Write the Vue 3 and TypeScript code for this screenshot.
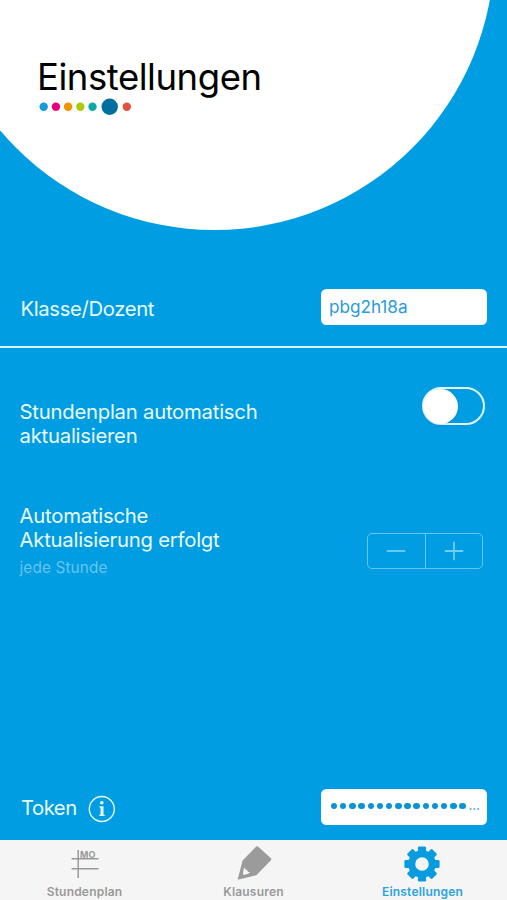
<script setup lang="ts">
import { ref } from 'vue'

interface Dot { color: string; active?: boolean }

const dots: Dot[] = [
  { color: '#129be0' },
  { color: '#e6007e' },
  { color: '#f39200' },
  { color: '#afca0b' },
  { color: '#0fa9a5' },
  { color: '#006f9f', active: true },
  { color: '#e2513d' },
]
const className = ref('pbg2h18a')
const autoUpdate = ref(false)
const tokenDots = Array.from({ length: 15 }, (_, i) => i)
const teeth = [0, 45, 90, 135, 180, 225, 270, 315]
</script>

<template>
  <div class="screen">
    <header class="header">
      <svg class="disc" width="507" height="240" viewBox="0 0 507 240" aria-hidden="true">
        <circle cx="214.3" cy="-50" r="280" />
      </svg>
      <h1 class="title">Einstellungen</h1>
      <div class="dots">
        <svg width="96" height="18" viewBox="0 0 96 18" aria-hidden="true">
          <circle
            v-for="(d, i) in dots" :key="d.color"
            :cx="i < 5 ? 4.7 + i * 12.2 : d.active ? 70.7 : 87.8" cy="8.8"
            :r="d.active ? 8.2 : 4.2" :fill="d.color"
          />
        </svg>
      </div>
    </header>

    <section class="row class-row">
      <span class="label klasse">Klasse/Dozent</span>
      <div class="field">{{ className }}</div>
    </section>

    <section class="row auto-row">
      <p class="label">Stundenplan automatisch<br />aktualisieren</p>
      <button class="switch" role="switch" :aria-checked="autoUpdate" @click="autoUpdate = !autoUpdate">
        <span class="knob" :class="{ on: autoUpdate }"></span>
      </button>
    </section>

    <section class="row interval-row">
      <div>
        <p class="label">Automatische<br />Aktualisierung erfolgt</p>
        <p class="hint">jede Stunde</p>
      </div>
      <div class="stepper">
        <button class="step"><svg width="20" height="20" viewBox="0 0 20 20"><path d="M.7 10h18.6" /></svg></button>
        <button class="step"><svg width="20" height="20" viewBox="0 0 20 20"><path d="M.7 10h18.6M10 .7v18.6" /></svg></button>
      </div>
    </section>

    <section class="row token-row">
      <div class="token-label">
        <span class="label token">Token</span>
        <svg class="info" width="28" height="28" viewBox="0 0 28 28">
          <circle class="ring" cx="13.8" cy="14" r="12.5" />
          <circle class="fill" cx="13.8" cy="7.8" r="1.8" />
          <path class="fill" d="M11.3 11.2h4.2v8.5h1.2v1.2h-5.4v-1.2h1.2v-7.3h-1.2z" />
        </svg>
      </div>
      <div class="field secret">
        <span v-for="i in tokenDots" :key="i" class="bullet"></span>
        <span class="more">…</span>
      </div>
    </section>

    <nav class="tabs">
      <a class="tab">
        <svg width="36" height="36" viewBox="0 0 36 36">
          <path class="grid" d="M4.5 14.7h27M4.5 24.7h27M11.2 6v28" />
          <text x="13" y="13.6" class="mo">MO</text>
        </svg>
        <span>Stundenplan</span>
      </a>
      <a class="tab">
        <svg width="36" height="36" viewBox="0 0 36 36">
          <path class="pencil" fill-rule="evenodd" d="M20.3 2.5q1-.7 2 .2l12.6 11.5q.9 1 0 2.1L20.3 31.2 1.6 35.8 6.6 16.4zM8 23.2 6.8 30.4q3.6 1 7.4-1.9-2.8-.2-3.1-2.3-2.2-.1-3.1-3z" />
        </svg>
        <span>Klausuren</span>
      </a>
      <a class="tab selected">
        <svg class="gear" width="36" height="36" viewBox="0 0 36 36">
          <g class="teeth">
            <rect v-for="a in teeth" :key="a" x="13.9" y=".4" width="8.2" height="9" rx="1.3" :transform="`rotate(${a} 18 18)`" />
          </g>
          <circle class="hub" cx="18" cy="18" r="10.3" />
        </svg>
        <span>Einstellungen</span>
      </a>
    </nav>
  </div>
</template>

<style>
body { margin: 0; }
</style>

<style scoped>
.screen {
  width: 507px; height: 900px; overflow: hidden; box-sizing: border-box;
  display: flex; flex-direction: column;
  background: #009de2; color: #e9faff;
  font-family: Inter, "Liberation Sans", sans-serif;
}
.header { position: relative; height: 289px; flex: none; box-sizing: border-box; padding: 55px 0 0 37px; }
.disc { position: absolute; left: 0; top: 0; }
.disc circle { fill: #fff; }
.title { position: relative; margin: 0; font-size: 36.5px; line-height: 44px; font-weight: 400; color: #000; letter-spacing: -0.46px; white-space: nowrap; }
.dots { position: relative; height: 18px; margin: -1px 0 0 2px; }
.dots svg { display: block; }
.row { display: flex; justify-content: space-between; flex: none; box-sizing: border-box; }
.label { margin: 0; font-size: 20.3px; line-height: 24.3px; letter-spacing: -0.23px; white-space: nowrap; }
.class-row { height: 59px; padding: 0 20px 0 20.5px; border-bottom: 2px solid #d9f3fd; }
.klasse { padding-top: 8px; letter-spacing: -0.36px; }
.field {
  width: 166px; height: 36px; box-sizing: border-box; border-radius: 5.5px; padding: 0 8px;
  background: #fff; color: #2b9bda; font-size: 17.2px; line-height: 35px; letter-spacing: -0.04px;
}
.auto-row { height: 156px; padding: 52px 22px 0 19.5px; }
.switch {
  width: 63px; height: 38px; margin-top: -13px; padding: 0; box-sizing: border-box; flex: none;
  border: 2px solid #e3f6fe; border-radius: 19px; background: none; display: flex; align-items: center;
}
.knob { width: 35px; height: 35px; margin-left: -1px; border-radius: 50%; background: #fff; box-shadow: 0 2px 4px rgba(0, 60, 120, .1); }
.knob.on { margin-left: 25px; }
.interval-row { height: 285px; padding: 0 24px 0 19.5px; }
.hint { margin: 5px 0 0; font-size: 15.3px; line-height: 20px; letter-spacing: .15px; color: #66c4ef; }
.stepper { display: flex; width: 116px; height: 36px; margin-top: 29px; box-sizing: border-box; border: 1.5px solid #62c8f3; border-radius: 5px; }
.step { flex: 1; padding: 0; border: 0; background: none; display: flex; align-items: center; justify-content: center; }
.step + .step { border-left: 1.5px solid #62c8f3; }
.step path { stroke: #70cef5; stroke-width: 1.8; fill: none; }
.token-row { height: 51px; padding: 0 20px 0 21px; }
.token-label { display: flex; gap: 11px; padding-top: 5.5px; }
.token { padding-top: 1.5px; letter-spacing: -0.5px; }
.info .ring { fill: none; stroke: #e9faff; stroke-width: 1.4; }
.info .fill { fill: #e9faff; }
.secret { display: flex; align-items: center; gap: 2.8px; padding: 0 0 2px 9.8px; }
.bullet { width: 6.4px; height: 6.4px; border-radius: 50%; background: #0c93d7; flex: none; }
.more { font-size: 12px; line-height: 12px; height: 12px; font-weight: 600; }
.tabs { display: flex; flex: none; height: 60px; background: #f5f5f5; color: #999; }
.tab { width: 169px; display: flex; flex-direction: column; align-items: center; padding-top: 4px; }
.tab svg { flex: none; }
.tab span { font-size: 12px; font-weight: 600; line-height: 16px; margin-top: 3.5px; letter-spacing: .2px; }
.tab .gear { margin: 1.5px 1.2px -1.5px 0; }
.teeth { fill: #089cdf; }
.hub { fill: none; stroke: #089cdf; stroke-width: 7; }
.pencil { fill: #9b9b9b; }
.grid { stroke: #999; stroke-width: 1.5; fill: none; }
.mo { font-size: 9px; font-weight: 700; fill: #999; }
.selected { color: #2aa4e0; }
</style>
